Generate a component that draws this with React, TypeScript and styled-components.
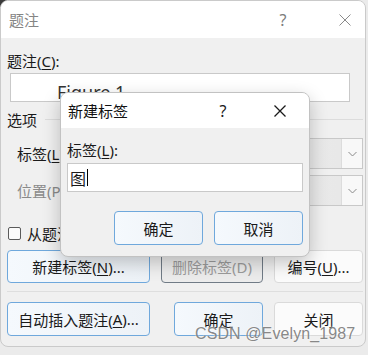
import React from "react";
import styled, { createGlobalStyle, css } from "styled-components";

const Global = createGlobalStyle`
  html, body { margin: 0; padding: 0; }
  body {
    width: 368px;
    height: 355px;
    overflow: hidden;
    background: linear-gradient(135deg, #3b3b3b 0 5px, #ebebeb 5px);
    font-family: "Noto Sans", "Noto Sans CJK SC", sans-serif;
    color: #1a1a1a;
  }
`;

const Stage = styled.div`
  position: relative;
  width: 368px;
  height: 355px;
`;

const Dialog = styled.div`
  width: 366px;
  height: 347px;
  box-sizing: border-box;
  border: 1px solid #cacaca;
  border-radius: 8px;
  background: #f0f0f0;
  overflow: hidden;
  display: flex;
  flex-direction: column;
`;

const TitleBar = styled.div<{ $h: number; $pl: number; $pr: number }>`
  height: ${(p) => p.$h}px;
  flex: none;
  background: #ffffff;
  display: flex;
  align-items: center;
  padding-left: ${(p) => p.$pl}px;
  padding-right: ${(p) => p.$pr}px;
`;

const Title = styled.span<{ $dim?: boolean }>`
  font-size: 15px;
  color: ${(p) => (p.$dim ? "#858585" : "#111111")};
  flex: 1;
`;

const CaptionBtn = styled.div<{ $w: number; $mr?: number; $dim?: boolean }>`
  width: ${(p) => p.$w}px;
  margin-right: ${(p) => p.$mr ?? 0}px;
  display: flex;
  align-items: center;
  justify-content: center;
  font-family: "Noto Sans", sans-serif;
  font-size: 16px;
  color: ${(p) => (p.$dim ? "#7c7c7c" : "#1a1a1a")};
`;

const Body = styled.div`
  flex: 1;
  display: flex;
  flex-direction: column;
  padding: 0 2px 0 6px;
`;

const Label = styled.div<{ $mt: number; $dim?: boolean }>`
  margin-top: ${(p) => p.$mt}px;
  height: 22px;
  line-height: 22px;
  font-size: 15px;
  color: ${(p) => (p.$dim ? "#8a8a8a" : "#1a1a1a")};
  white-space: nowrap;
`;

const U = styled.span`
  text-decoration: underline;
  text-underline-offset: 2px;
`;

const TextBox = styled.div<{ $mt: number; $ml?: number; $w: number }>`
  margin-top: ${(p) => p.$mt}px;
  margin-left: ${(p) => p.$ml ?? 0}px;
  width: ${(p) => p.$w}px;
  height: 29px;
  box-sizing: border-box;
  border: 1px solid #c9c9c9;
  background: #ffffff;
  display: flex;
  align-items: center;
  overflow: hidden;
`;

const FigureText = styled.span`
  font-family: "Noto Sans", sans-serif;
  font-size: 18px;
  color: #333333;
  margin-left: 46px;
  padding-top: 8px;
`;

const InputText = styled.span`
  font-size: 16px;
  color: #1a1a1a;
  margin-left: 2px;
`;

const Caret = styled.span`
  width: 1px;
  height: 17px;
  background: #000;
  margin-left: 1px;
`;

const GroupHeader = styled.div`
  margin-top: 6px;
  height: 22px;
  display: flex;
  align-items: center;
  font-size: 15px;
`;

const GroupLine = styled.div`
  flex: 1;
  height: 1px;
  margin-left: 8px;
  background: #dcdcdc;
`;

const ComboRow = styled.div<{ $mt: number }>`
  margin-top: ${(p) => p.$mt}px;
  height: 31px;
  display: flex;
  align-items: center;
  padding-left: 10px;
`;

const Combo = styled.div`
  margin-left: auto;
  width: 263px;
  height: 31px;
  box-sizing: border-box;
  border: 1px solid #c8c8c8;
  background: linear-gradient(90deg, #f2f2f2, #e7e7e7);
  display: flex;
  justify-content: flex-end;
`;

const ComboArrow = styled.div`
  width: 20px;
  border-left: 1px solid #dcdcdc;
  background: #f8f8f8;
  display: flex;
  align-items: center;
  justify-content: center;
`;

const CheckRow = styled.div`
  margin-top: 17px;
  height: 20px;
  display: flex;
  align-items: center;
  font-size: 15px;
`;

const CheckBox = styled.div`
  width: 13px;
  height: 13px;
  box-sizing: border-box;
  margin-left: 1px;
  margin-right: 6px;
  border: 1px solid #5a5a5a;
  border-radius: 2px;
  background: #fbfbfb;
`;

const ButtonRow = styled.div<{ $mt: number }>`
  margin-top: ${(p) => p.$mt}px;
  display: flex;
  justify-content: flex-end;
  gap: 11px;
`;

type Kind = "focus" | "normal" | "disabled";

const Button = styled.div<{ $w: number; $h: number; $kind: Kind; $auto?: boolean }>`
  width: ${(p) => p.$w}px;
  height: ${(p) => p.$h}px;
  box-sizing: border-box;
  border-radius: 4px;
  display: flex;
  align-items: center;
  justify-content: center;
  font-size: 15px;
  white-space: nowrap;
  ${(p) => (p.$auto ? "margin-right: auto;" : "")}
  ${(p) =>
    p.$kind === "focus"
      ? css`
          border: 1px solid #6fa8dc;
          background: linear-gradient(90deg, #f5f9fd, #edf2f7);
          color: #1a1a1a;
        `
      : p.$kind === "disabled"
      ? css`
          border: 1px solid #707b86;
          background: #ececec;
          color: #9b9b9b;
        `
      : css`
          border: 1px solid #dadada;
          background: #fbfbfb;
          color: #1a1a1a;
        `}
`;

const Separator = styled.div`
  margin-top: 8px;
  height: 1px;
  background: #dedede;
`;

const Popup = styled.div`
  position: absolute;
  left: 60px;
  top: 92px;
  width: 250px;
  height: 165px;
  box-sizing: border-box;
  border: 1px solid #c2c2c2;
  border-radius: 8px;
  background: #f0f0f0;
  overflow: hidden;
  display: flex;
  flex-direction: column;
  box-shadow: 0 6px 18px rgba(0, 0, 0, 0.22);
`;

const PopupBody = styled.div`
  display: flex;
  flex-direction: column;
  padding: 0 6px;
`;

const Watermark = styled.div`
  position: absolute;
  left: 195px;
  top: 325px;
  font-family: "Liberation Sans", Arial, sans-serif;
  font-size: 16px;
  line-height: 18px;
  color: rgba(105, 105, 105, 0.8);
  text-shadow: 0 0 2px rgba(255, 255, 255, 0.9);
  letter-spacing: 0.1px;
  white-space: nowrap;
`;

const CloseIcon = ({ size, color, w }: { size: number; color: string; w: number }) => (
  <svg width={size} height={size} viewBox="0 0 12 12">
    <path d="M0.5 0.5 L11.5 11.5 M11.5 0.5 L0.5 11.5" stroke={color} strokeWidth={w} fill="none" />
  </svg>
);

const Chevron = () => (
  <svg width="9" height="6" viewBox="0 0 9 6">
    <path d="M0.5 1 L4.5 5 L8.5 1" stroke="#8a8a8a" strokeWidth="1" fill="none" />
  </svg>
);

export default function App() {
  return (
    <Stage>
      <Global />
      <Dialog>
        <TitleBar $h={37} $pl={8} $pr={3}>
          <Title $dim>题注</Title>
          <CaptionBtn $w={40} $mr={25} $dim>?</CaptionBtn>
          <CaptionBtn $w={34} $dim>
            <CloseIcon size={12} color="#8a8a8a" w={1} />
          </CaptionBtn>
        </TitleBar>
        <Body>
          <Label $mt={12}>
            题注(<U>C</U>):
          </Label>
          <TextBox $mt={1} $ml={3} $w={340}>
            <FigureText>Figure 1</FigureText>
          </TextBox>
          <GroupHeader>
            选项
            <GroupLine />
          </GroupHeader>
          <ComboRow $mt={8}>
            <Label $mt={0}>
              标签(<U>L</U>):
            </Label>
            <Combo>
              <ComboArrow>
                <Chevron />
              </ComboArrow>
            </Combo>
          </ComboRow>
          <ComboRow $mt={6}>
            <Label $mt={0} $dim>
              位置(P):
            </Label>
            <Combo>
              <ComboArrow>
                <Chevron />
              </ComboArrow>
            </Combo>
          </ComboRow>
          <CheckRow>
            <CheckBox />
            从题注中排除标签(E)
          </CheckRow>
          <ButtonRow $mt={7}>
            <Button $w={143} $h={33} $kind="focus" $auto>
              新建标签(<U>N</U>)...
            </Button>
            <Button $w={102} $h={33} $kind="disabled">
              删除标签(D)
            </Button>
            <Button $w={89} $h={33} $kind="normal">
              编号(<U>U</U>)...
            </Button>
          </ButtonRow>
          <Separator />
          <ButtonRow $mt={10}>
            <Button $w={143} $h={34} $kind="focus" $auto>
              自动插入题注(<U>A</U>)...
            </Button>
            <Button $w={89} $h={34} $kind="focus">
              确定
            </Button>
            <Button $w={89} $h={34} $kind="normal">
              关闭
            </Button>
          </ButtonRow>
        </Body>
      </Dialog>

      <Popup>
        <TitleBar $h={35} $pl={7} $pr={14}>
          <Title>新建标签</Title>
          <CaptionBtn $w={30} $mr={27}>?</CaptionBtn>
          <CaptionBtn $w={30}>
            <CloseIcon size={12} color="#1a1a1a" w={1.3} />
          </CaptionBtn>
        </TitleBar>
        <PopupBody>
          <Label $mt={11}>
            标签(<U>L</U>):
          </Label>
          <TextBox $mt={2} $w={236}>
            <InputText>图</InputText>
            <Caret />
          </TextBox>
          <ButtonRow $mt={19}>
            <Button $w={89} $h={34} $kind="focus">
              确定
            </Button>
            <Button $w={89} $h={34} $kind="focus">
              取消
            </Button>
          </ButtonRow>
        </PopupBody>
      </Popup>

      <Watermark>CSDN @Evelyn_1987</Watermark>
    </Stage>
  );
}
